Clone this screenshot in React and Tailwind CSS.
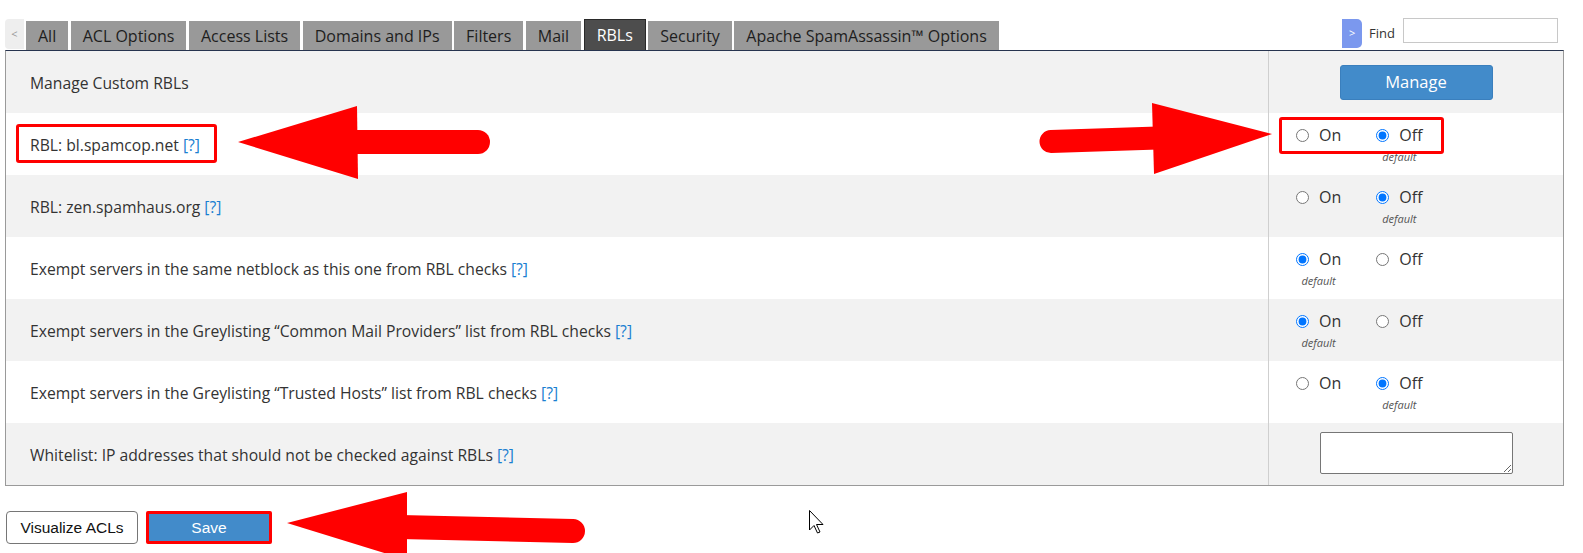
import { useState } from "react";

const tabs = [
  "All",
  "ACL Options",
  "Access Lists",
  "Domains and IPs",
  "Filters",
  "Mail",
  "RBLs",
  "Security",
  "Apache SpamAssassin™ Options",
];

const rows = [
  { label: "Manage Custom RBLs", kind: "manage" },
  { label: "RBL: bl.spamcop.net", help: true, kind: "radio", value: "off", def: "off" },
  { label: "RBL: zen.spamhaus.org", help: true, kind: "radio", value: "off", def: "off" },
  { label: "Exempt servers in the same netblock as this one from RBL checks", help: true, kind: "radio", value: "on", def: "on" },
  { label: "Exempt servers in the Greylisting “Common Mail Providers” list from RBL checks", help: true, kind: "radio", value: "on", def: "on" },
  { label: "Exempt servers in the Greylisting “Trusted Hosts” list from RBL checks", help: true, kind: "radio", value: "off", def: "off" },
  { label: "Whitelist: IP addresses that should not be checked against RBLs", help: true, kind: "text" },
];

const RadioOption = ({ name, label, checked, isDefault, onChange }) => (
  <div className="flex flex-col items-center">
    <label className="flex items-center gap-[10px] h-[28px] text-[16px] text-[#333]">
      <input type="radio" name={name} checked={checked} onChange={onChange} className="m-0 w-[13px] h-[13px]" />
      <span>{label}</span>
    </label>
    <span className={`mt-[1px] text-[11px] italic leading-[14px] text-[#555] ${isDefault ? "" : "invisible"}`}>default</span>
  </div>
);

const Row = ({ row, idx }) => {
  const [value, setValue] = useState(row.value);
  const bg = idx % 2 === 0 ? "bg-[#f2f2f2]" : "bg-white";

  return (
    <div className={`grid grid-cols-[1fr_295px] h-[62px] ${bg}`}>
      <div className="flex items-center pl-[24px] pt-[3px] text-[15.7px] text-[#333]">
        {row.label}
        {row.help && <a className="ml-[4px] text-[#1a7fd1]">[?]</a>}
      </div>
      <div className="border-l border-[#cfcfcf]">
        {row.kind === "manage" && (
          <div className="h-full flex items-center justify-center">
            <button className="w-[153px] h-[35px] rounded-[3px] bg-[#428bca] border border-[#3a7fbd] text-white text-[16.5px]">
              Manage
            </button>
          </div>
        )}
        {row.kind === "radio" && (
          <div className="flex gap-[35px] pl-[27px] pt-[8px]">
            <RadioOption
              name={`r${idx}`}
              label="On"
              checked={value === "on"}
              isDefault={row.def === "on"}
              onChange={() => setValue("on")}
            />
            <RadioOption
              name={`r${idx}`}
              label="Off"
              checked={value === "off"}
              isDefault={row.def === "off"}
              onChange={() => setValue("off")}
            />
          </div>
        )}
        {row.kind === "text" && (
          <div className="flex justify-center pt-[9px]">
            <textarea className="w-[193px] h-[42px] border border-[#767676] rounded-[2px] bg-white resize" />
          </div>
        )}
      </div>
    </div>
  );
};

const Annotations = () => (
  <svg className="absolute inset-0 pointer-events-none" width="1583" height="553" viewBox="0 0 1583 553">
    <g fill="#ff0000" stroke="#ff0000" strokeLinecap="round">
      <line x1="350" y1="142" x2="478" y2="142" strokeWidth="24" />
      <polygon points="238,142 357,106 358,179" stroke="none" />
      <line x1="1051" y1="141.5" x2="1158" y2="138" strokeWidth="23" />
      <polygon points="1272,134 1152,103 1154,174" stroke="none" />
      <line x1="400" y1="527" x2="573" y2="531" strokeWidth="24" />
      <polygon points="287,523 407,492 407,560" stroke="none" />
    </g>
    <path
      d="M809.5 510.5 L809.5 530 L814 525.5 L817.5 533 L820 532 L816.5 524.5 L823 524.5 Z"
      fill="#fff"
      stroke="#000"
      strokeWidth="1"
      strokeLinejoin="miter"
    />
  </svg>
);

export default function App() {
  return (
    <div className="relative w-[1583px] h-[553px] bg-white overflow-hidden font-['Open_Sans',sans-serif]">
      <div className="flex items-end h-[50px] pl-[5px] pr-[25px]">
        <div className="w-[19px] h-[30px] mb-[1px] mr-[2px] rounded-l-[4px] bg-[#eeeeee] text-[#999] text-[11px] flex items-center justify-center">
          &lt;
        </div>
        <div className="flex items-end gap-[2.5px]">
          {tabs.map((t) =>
            t === "RBLs" ? (
              <div
                key={t}
                className="h-[31px] px-[12px] flex items-center bg-[#4d4d4d] border border-b-0 border-[#2a2a2a] text-white text-[16px]"
              >
                {t}
              </div>
            ) : (
              <div key={t} className="h-[29px] px-[12px] flex items-center bg-[#999999] text-[#1e1e1e] text-[16px]">
                {t}
              </div>
            )
          )}
        </div>
        <div className="ml-auto self-start mt-[18px] flex items-start">
          <div className="w-[20px] h-[29px] mt-[1px] rounded-r-[5px] bg-[#7b98ee] text-white text-[11px] flex items-center justify-center">
            &gt;
          </div>
          <span className="ml-[7px] mt-[6px] text-[13px] text-[#333]">Find</span>
          <input className="ml-[8px] w-[155px] h-[25px] border border-[#c8c8c8] bg-white" />
        </div>
      </div>

      <div className="ml-[5px] w-[1559px] border border-[#9a9a9a] border-t-[#27344f]">
        {rows.map((r, i) => (
          <Row key={i} row={r} idx={i} />
        ))}
      </div>

      <div className="flex items-center gap-[8px] pl-[6px] mt-[25px] font-['Liberation_Sans',sans-serif]">
        <button className="w-[132px] h-[33px] rounded-[4px] border border-[#767676] bg-white text-[15.5px] text-[#111]">
          Visualize ACLs
        </button>
        <button className="w-[126px] h-[33px] rounded-[2px] border-[3px] border-[#f00] bg-[#428bca] text-white text-[15.5px]">
          Save
        </button>
      </div>

      <div className="absolute left-[16px] top-[124px] w-[201px] h-[39px] border-[3px] border-[#f00] rounded-[3px]" />
      <div className="absolute left-[1279px] top-[117px] w-[165px] h-[37px] border-[3px] border-[#f00] rounded-[3px]" />

      <Annotations />
    </div>
  );
}
